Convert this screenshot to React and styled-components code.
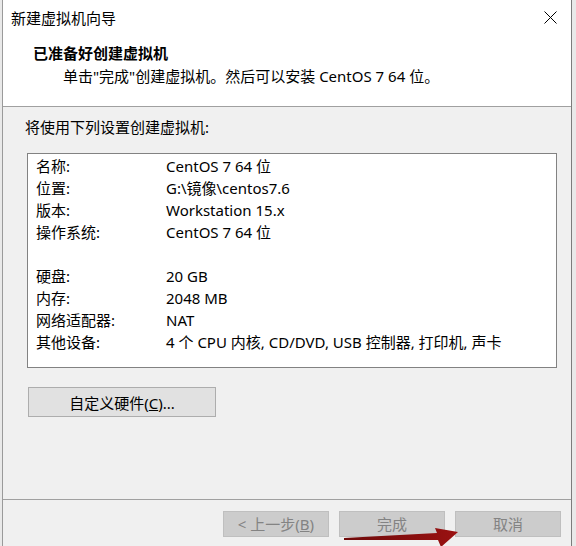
import styled, { createGlobalStyle } from "styled-components";

const GlobalStyle = createGlobalStyle`
  html, body {
    margin: 0;
    padding: 0;
    background: #e9e9e9;
  }
  body {
    font-family: "Noto Sans", "Noto Sans CJK SC", sans-serif;
    font-size: 15px;
    color: #000;
  }
`;

const Page = styled.div`
  width: 576px;
  height: 546px;
  overflow: hidden;
  display: flex;
  padding-left: 2px;
  box-sizing: border-box;
`;

const Window = styled.div`
  position: relative;
  width: 570px;
  height: 546px;
  box-sizing: border-box;
  border-left: 1px solid #9a9a9a;
  border-right: 1px solid #7c7c7c;
  background: #f0f0f0;
  display: flex;
  flex-direction: column;
`;

const Header = styled.div`
  background: #fff;
  height: 107px;
  box-sizing: border-box;
  border-bottom: 1px solid #a0a0a0;
  flex-shrink: 0;
`;

const TitleBar = styled.div`
  height: 34px;
  display: flex;
  align-items: center;
  justify-content: space-between;
  padding: 0 14px 0 8px;
  font-size: 15px;
`;

const CloseButton = styled.div`
  width: 14px;
  height: 14px;
  display: flex;
  align-items: center;
  justify-content: center;
  svg {
    display: block;
  }
`;

const HeaderText = styled.div`
  padding-top: 8px;
  display: flex;
  flex-direction: column;
  gap: 1px;
`;

const HeaderTitle = styled.div`
  padding-left: 30px;
  font-weight: 700;
  font-size: 15px;
  line-height: 22px;
`;

const HeaderSub = styled.div`
  padding-left: 60px;
  line-height: 22px;
`;

const Body = styled.div`
  flex: 1;
  padding: 9px 13px 0 22px;
  display: flex;
  flex-direction: column;
  border-bottom: 1px solid #a0a0a0;
`;

const Intro = styled.div`
  line-height: 22px;
`;

const SummaryBox = styled.div`
  margin: 15px 0 0 2px;
  width: 530px;
  box-sizing: border-box;
  background: #fff;
  border: 1px solid #828282;
  padding: 1px 0 14px 8px;
`;

const Row = styled.div`
  display: grid;
  grid-template-columns: 130px 1fr;
  height: 22px;
  line-height: 22px;
  white-space: nowrap;
`;

const CustomizeButton = styled.button`
  margin: 19px 0 0 3px;
  width: 188px;
  height: 30px;
  background: #e1e1e1;
  border: 1px solid #adadad;
  font: inherit;
  font-size: 15px;
  color: #000;
  padding: 0;
  u {
    text-decoration: underline;
  }
`;

const Footer = styled.div`
  height: 46px;
  flex-shrink: 0;
  display: flex;
  justify-content: flex-end;
  align-items: flex-start;
  gap: 10px;
  padding: 11px 10px 0 0;
  box-sizing: border-box;
`;

const FooterButton = styled.button`
  width: 106px;
  height: 26px;
  padding: 0;
  background: #cccccc;
  border: 1px solid #bfbfbf;
  color: #838383;
  font: inherit;
  font-size: 15px;
  line-height: 22px;
`;

const Arrow = styled.svg`
  position: absolute;
  left: 340px;
  top: 524px;
  width: 120px;
  height: 24px;
`;

const rows = [
  ["名称:", "CentOS 7 64 位"],
  ["位置:", "G:\\镜像\\centos7.6"],
  ["版本:", "Workstation 15.x"],
  ["操作系统:", "CentOS 7 64 位"],
  ["", ""],
  ["硬盘:", "20 GB"],
  ["内存:", "2048 MB"],
  ["网络适配器:", "NAT"],
  ["其他设备:", "4 个 CPU 内核, CD/DVD, USB 控制器, 打印机, 声卡"],
];

export default function App() {
  return (
    <>
      <GlobalStyle />
      <Page>
        <Window>
          <Header>
            <TitleBar>
              <span>新建虚拟机向导</span>
              <CloseButton>
                <svg width="13" height="13" viewBox="0 0 13 13">
                  <path d="M0.5 0.5 L12.5 12.5 M12.5 0.5 L0.5 12.5" stroke="#000" strokeWidth="1" />
                </svg>
              </CloseButton>
            </TitleBar>
            <HeaderText>
              <HeaderTitle>已准备好创建虚拟机</HeaderTitle>
              <HeaderSub>单击"完成"创建虚拟机。然后可以安装 CentOS 7 64 位。</HeaderSub>
            </HeaderText>
          </Header>
          <Body>
            <Intro>将使用下列设置创建虚拟机:</Intro>
            <SummaryBox>
              {rows.map(([label, value], i) => (
                <Row key={i}>
                  <span>{label}</span>
                  <span>{value}</span>
                </Row>
              ))}
            </SummaryBox>
            <div>
              <CustomizeButton>
                自定义硬件(<u>C</u>)...
              </CustomizeButton>
            </div>
          </Body>
          <Footer>
            <FooterButton>
              &lt; 上一步(<u>B</u>)
            </FooterButton>
            <FooterButton>完成</FooterButton>
            <FooterButton>取消</FooterButton>
          </Footer>
          <Arrow viewBox="0 0 120 24">
            <defs>
              <linearGradient id="arrowFill" x1="0" x2="1" y1="0" y2="0">
                <stop offset="0" stopColor="#6e0a0a" />
                <stop offset="1" stopColor="#9a1212" />
              </linearGradient>
            </defs>
            <polygon
              points="1,14 94,9 92,4 115,8 98,23 95,16 1,16"
              fill="url(#arrowFill)"
            />
          </Arrow>
        </Window>
      </Page>
    </>
  );
}
